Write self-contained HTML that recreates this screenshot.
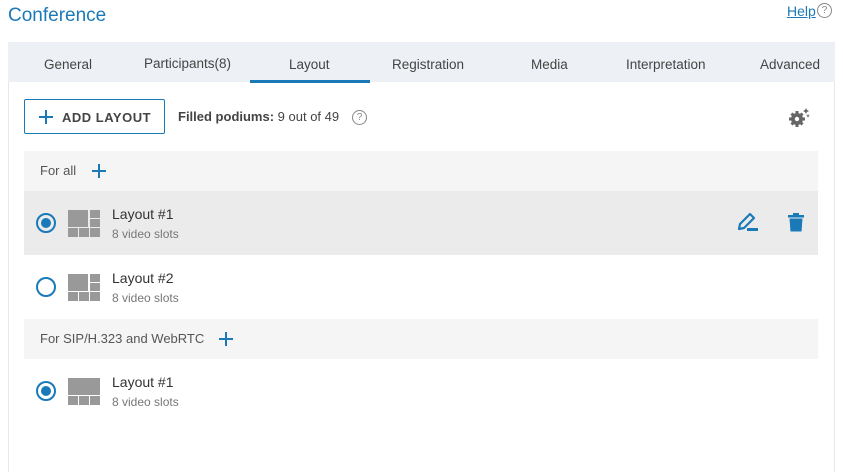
<!DOCTYPE html>
<html><head><style>
*{box-sizing:border-box;margin:0;padding:0}
body{width:843px;height:467px;background:#fff;font-family:"Liberation Sans","DejaVu Sans",sans-serif;color:#333;position:relative;overflow:hidden}
.a{position:absolute}
.title{left:8px;top:5px;font-size:19px;color:#1a7ab8}
.help{left:787px;top:3px;font-size:14px;color:#1a7ab8;text-decoration:underline}
.q{width:15px;height:15px;border:1px solid #888;border-radius:50%;font-size:10px;color:#888;text-align:center;line-height:13px}
.panel{left:8px;top:42px;width:827px;height:430px;border-left:1px solid #e6e9ec;border-right:1px solid #e6e9ec}
.tabs{left:8px;top:42px;width:827px;height:40px;background:#edf1f5}
.tab{top:57px;font-size:13.5px;color:#444}
.btn{left:24px;top:99px;width:141px;height:35px;border:1px solid #1a7ab8;border-radius:2px;font-size:13px;font-weight:bold;color:#444;letter-spacing:.5px}
.sec{left:24px;width:794px;height:40px;background:#f5f5f5;font-size:13px;color:#555;padding:12px 16px}
.row{left:24px;width:794px;height:64px}
.radio{width:20px;height:20px;border:2px solid #1a7ab8;border-radius:50%}
.radio.on::after{content:"";position:absolute;left:3px;top:3px;width:10px;height:10px;border-radius:50%;background:#1a7ab8}
.ic{width:32px;height:27px}
.ic i{position:absolute;background:#999}
.n1{font-size:14px;color:#333}
.n2{font-size:12px;color:#777}
.pl{position:absolute;width:14px;height:14px}
.pl::before{content:"";position:absolute;left:6px;top:0;width:2px;height:14px;background:#1a7ab8}
.pl::after{content:"";position:absolute;left:0;top:6px;width:14px;height:2px;background:#1a7ab8}
</style></head><body>
<div class="a title">Conference</div>
<div class="a help">Help</div>
<div class="a q" style="left:817px;top:3px">?</div>
<div class="a panel"></div>
<div class="a tabs"></div>
<div class="a tab" style="left:44px">General</div>
<div class="a tab" style="left:144px;top:56px">Participants(8)</div>
<div class="a tab" style="left:289px">Layout</div>
<div class="a" style="left:250px;top:80px;width:120px;height:3px;background:#1a7ab8"></div>
<div class="a tab" style="left:392px">Registration</div>
<div class="a tab" style="left:531px">Media</div>
<div class="a tab" style="left:626px">Interpretation</div>
<div class="a tab" style="left:760px">Advanced</div>
<div class="a btn"><span class="pl" style="left:14px;top:10px;width:12px;height:12px"></span><span class="a" style="left:37px;top:10px">ADD LAYOUT</span></div>
<div class="a" style="left:178px;top:109px;font-size:13px;color:#444"><b>Filled podiums:</b> 9 out of 49</div>
<div class="a q" style="left:352px;top:110px">?</div>
<svg class="a" style="left:787px;top:106px" width="24" height="24" viewBox="0 0 24 24"><g fill="#666"><circle cx="10" cy="13" r="6"/><g stroke="#666" stroke-width="3"><line x1="10" y1="5" x2="10" y2="21"/><line x1="2" y1="13" x2="18" y2="13"/><line x1="4.5" y1="7.5" x2="15.5" y2="18.5"/><line x1="15.5" y1="7.5" x2="4.5" y2="18.5"/></g><circle cx="10" cy="13" r="2.2" fill="#fff"/><path d="M19 2l1 2 2 1-2 1-1 2-1-2-2-1 2-1zM21 8l.6 1.2 1.2.6-1.2.6-.6 1.2-.6-1.2-1.2-.6 1.2-.6z"/></g></svg>

<div class="a sec" style="top:151px">For all <span class="pl" style="left:68px;top:13px"></span></div>
<div class="a row" style="top:191px;background:#ebebeb"></div>
<div class="a sec" style="top:319px;height:40px">For SIP/H.323 and WebRTC <span class="pl" style="left:195px;top:13px"></span></div>

<div class="a radio on" style="left:36px;top:213px"></div>
<div class="a radio" style="left:36px;top:277px"></div>
<div class="a radio on" style="left:36px;top:381px"></div>

<div class="a ic" style="left:68px;top:210px"><i style="left:0;top:0;width:20px;height:17px"></i><i style="left:22px;top:0;width:10px;height:8px"></i><i style="left:22px;top:9px;width:10px;height:8px"></i><i style="left:0;top:18px;width:10px;height:9px"></i><i style="left:11px;top:18px;width:10px;height:9px"></i><i style="left:22px;top:18px;width:10px;height:9px"></i></div>
<div class="a ic" style="left:68px;top:274px"><i style="left:0;top:0;width:20px;height:17px"></i><i style="left:22px;top:0;width:10px;height:8px"></i><i style="left:22px;top:9px;width:10px;height:8px"></i><i style="left:0;top:18px;width:10px;height:9px"></i><i style="left:11px;top:18px;width:10px;height:9px"></i><i style="left:22px;top:18px;width:10px;height:9px"></i></div>
<div class="a ic" style="left:68px;top:378px"><i style="left:0;top:0;width:32px;height:17px"></i><i style="left:0;top:18px;width:10px;height:9px"></i><i style="left:11px;top:18px;width:10px;height:9px"></i><i style="left:22px;top:18px;width:10px;height:9px"></i></div>

<div class="a n1" style="left:112px;top:206px">Layout #1</div><div class="a n2" style="left:112px;top:227px">8 video slots</div>
<div class="a n1" style="left:112px;top:270px">Layout #2</div><div class="a n2" style="left:112px;top:291px">8 video slots</div>
<div class="a n1" style="left:112px;top:374px">Layout #1</div><div class="a n2" style="left:112px;top:395px">8 video slots</div>

<svg class="a" style="left:737px;top:212px" width="22" height="20" viewBox="0 0 22 20"><path d="M2 17l1-5L13 2l4 4L7 16z" fill="none" stroke="#1a7ab8" stroke-width="2.2" stroke-linejoin="round"/><rect x="10" y="16" width="11" height="3" fill="#1a7ab8"/></svg>
<svg class="a" style="left:788px;top:212px" width="16" height="20" viewBox="0 0 16 20"><rect x="0" y="3" width="16" height="2.5" fill="#1a7ab8"/><rect x="5" y="1" width="6" height="3" fill="#1a7ab8"/><path d="M1.5 6.5h13l-1 13h-11z" fill="#1a7ab8"/></svg>
</body></html>
